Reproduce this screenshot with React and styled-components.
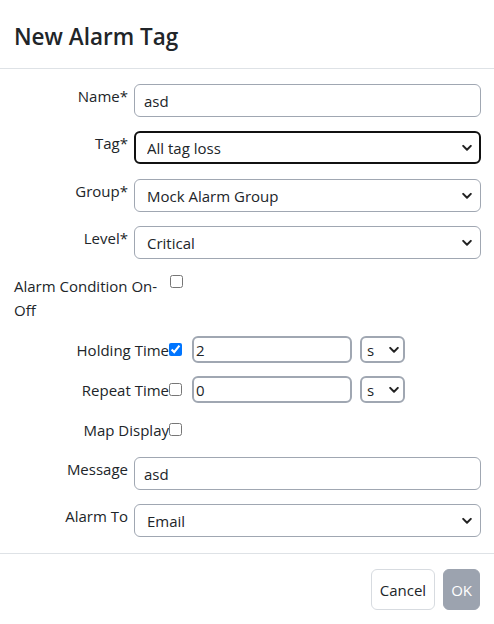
import React from "react";
import styled, { createGlobalStyle } from "styled-components";

const Global = createGlobalStyle`
  html, body { margin: 0; padding: 0; background: #fff; }
  body {
    font-family: "Segoe UI", "Open Sans", "Noto Sans", Arial, sans-serif;
    font-size: 15px;
    color: #212529;
  }
  * { box-sizing: border-box; }
`;

const Modal = styled.div`
  width: 494px;
  height: 624px;
  background: #fff;
  display: flex;
  flex-direction: column;
  border-top-right-radius: 6px;
  border-top-left-radius: 6px;
  overflow: hidden;
`;

const Header = styled.div`
  height: 69px;
  padding: 4px 14px 0;
  display: flex;
  align-items: center;
  border-bottom: 1px solid #dee2e6;
`;

const Title = styled.h5`
  margin: 0;
  font-size: 22.5px;
  font-weight: 600;
  color: #212529;
`;

const Body = styled.div`
  padding: 15px 13px 16px 14px;
  display: flex;
  flex-direction: column;
  border-bottom: 1px solid #dee2e6;
`;

const FieldRow = styled.div`
  display: grid;
  grid-template-columns: 114px 1fr;
  column-gap: 6px;
  margin-bottom: ${(p) => p.$mb ?? 14}px;
`;

const FieldLabel = styled.label`
  text-align: right;
  line-height: 24px;
  align-self: start;
  white-space: nowrap;
`;

const TextInput = styled.input`
  height: 33px;
  width: 100%;
  border: 1px solid #a0a7b2;
  border-radius: 6px;
  padding: 0 9px;
  font: inherit;
  font-size: 15px;
  color: #212529;
  outline: none;
  background: #fff;
`;

const SelectWrap = styled.div`
  position: relative;
  width: ${(p) => p.$w || "100%"};
`;

const Select = styled.select`
  appearance: none;
  -webkit-appearance: none;
  width: 100%;
  height: ${(p) => p.$h || 33}px;
  border: ${(p) => (p.$focus ? "2px solid #111" : p.$thick ? "2px solid #a0a7b2" : "1px solid #a0a7b2")};
  border-radius: 6px;
  padding: ${(p) => (p.$focus ? "0 30px 0 11px" : p.$small ? "0 20px 0 5px" : "0 30px 0 12px")};
  font: inherit;
  font-size: 15px;
  color: #212529;
  background: #fff;
  outline: none;
`;

const Chevron = styled.svg`
  position: absolute;
  right: ${(p) => p.$r || 9}px;
  top: 50%;
  transform: translateY(-50%);
  pointer-events: none;
`;

const CheckRow = styled.div`
  display: flex;
  align-items: ${(p) => (p.$top ? "flex-start" : "center")};
  height: ${(p) => (p.$h ? p.$h + "px" : "auto")};
  margin-bottom: ${(p) => p.$mb ?? 0}px;
`;

const CheckLabel = styled.label`
  width: 155px;
  flex: none;
  text-align: ${(p) => (p.$left ? "left" : "right")};
  line-height: 24px;
  white-space: ${(p) => (p.$left ? "normal" : "nowrap")};
`;

const Check = styled.input`
  width: 13px;
  height: 13px;
  margin: 0 0 0 ${(p) => p.$ml ?? 0}px;
  flex: none;
  accent-color: #0075ff;
`;

const TimeInput = styled.input`
  width: 160px;
  height: 27px;
  margin-left: 10px;
  border: 2px solid #a0a7b2;
  border-radius: 6px;
  padding: 0 2px;
  font: inherit;
  font-size: 15px;
  color: #212529;
  outline: none;
`;

const UnitGap = styled.div`
  margin-left: 8px;
`;

const Footer = styled.div`
  display: flex;
  justify-content: flex-end;
  gap: 8px;
  padding: 15px 14px 0;
`;

const Button = styled.button`
  height: 41px;
  padding: 0 ${(p) => (p.$primary ? 7 : 8)}px;
  border-radius: 6px;
  font: inherit;
  font-size: 15px;
  border: 1px solid ${(p) => (p.$primary ? "#9ca3af" : "#d7dbe0")};
  background: ${(p) => (p.$primary ? "#9ca3af" : "#fff")};
  color: ${(p) => (p.$primary ? "#fff" : "#212529")};
`;

const Chev = ({ r }) => (
  <Chevron $r={r} width="10" height="7" viewBox="0 0 10 7">
    <path d="M1.2 1.4 L5 5.2 L8.8 1.4" fill="none" stroke="#222" strokeWidth="2" strokeLinecap="round" strokeLinejoin="round" />
  </Chevron>
);

export default function App() {
  return (
    <>
      <Global />
      <Modal>
        <Header>
          <Title>New Alarm Tag</Title>
        </Header>
        <Body>
          <FieldRow>
            <FieldLabel>Name*</FieldLabel>
            <TextInput defaultValue="asd" />
          </FieldRow>
          <FieldRow $mb={15}>
            <FieldLabel>Tag*</FieldLabel>
            <SelectWrap>
              <Select $focus $h={33}>
                <option>All tag loss</option>
              </Select>
              <Chev />
            </SelectWrap>
          </FieldRow>
          <FieldRow>
            <FieldLabel>Group*</FieldLabel>
            <SelectWrap>
              <Select>
                <option>Mock Alarm Group</option>
              </Select>
              <Chev />
            </SelectWrap>
          </FieldRow>
          <FieldRow $mb={15}>
            <FieldLabel>Level*</FieldLabel>
            <SelectWrap>
              <Select>
                <option>Critical</option>
              </Select>
              <Chev />
            </SelectWrap>
          </FieldRow>
          <CheckRow $top $mb={14}>
            <CheckLabel $left>Alarm Condition On-Off</CheckLabel>
            <Check type="checkbox" $ml={1} style={{ marginTop: 1 }} />
          </CheckRow>
          <CheckRow $h={27} $mb={13}>
            <CheckLabel>Holding Time</CheckLabel>
            <Check type="checkbox" defaultChecked />
            <TimeInput defaultValue="2" />
            <UnitGap>
              <SelectWrap $w="45px">
                <Select $small $thick $h={27}>
                  <option>s</option>
                </Select>
                <Chev r={6} />
              </SelectWrap>
            </UnitGap>
          </CheckRow>
          <CheckRow $h={27} $mb={13}>
            <CheckLabel>Repeat Time</CheckLabel>
            <Check type="checkbox" />
            <TimeInput defaultValue="0" />
            <UnitGap>
              <SelectWrap $w="45px">
                <Select $small $thick $h={27}>
                  <option>s</option>
                </Select>
                <Chev r={6} />
              </SelectWrap>
            </UnitGap>
          </CheckRow>
          <CheckRow $h={27} $mb={14}>
            <CheckLabel>Map Display</CheckLabel>
            <Check type="checkbox" />
          </CheckRow>
          <FieldRow>
            <FieldLabel>Message</FieldLabel>
            <TextInput defaultValue="asd" />
          </FieldRow>
          <FieldRow $mb={0}>
            <FieldLabel>Alarm To</FieldLabel>
            <SelectWrap>
              <Select>
                <option>Email</option>
              </Select>
              <Chev />
            </SelectWrap>
          </FieldRow>
        </Body>
        <Footer>
          <Button>Cancel</Button>
          <Button $primary>OK</Button>
        </Footer>
      </Modal>
    </>
  );
}
